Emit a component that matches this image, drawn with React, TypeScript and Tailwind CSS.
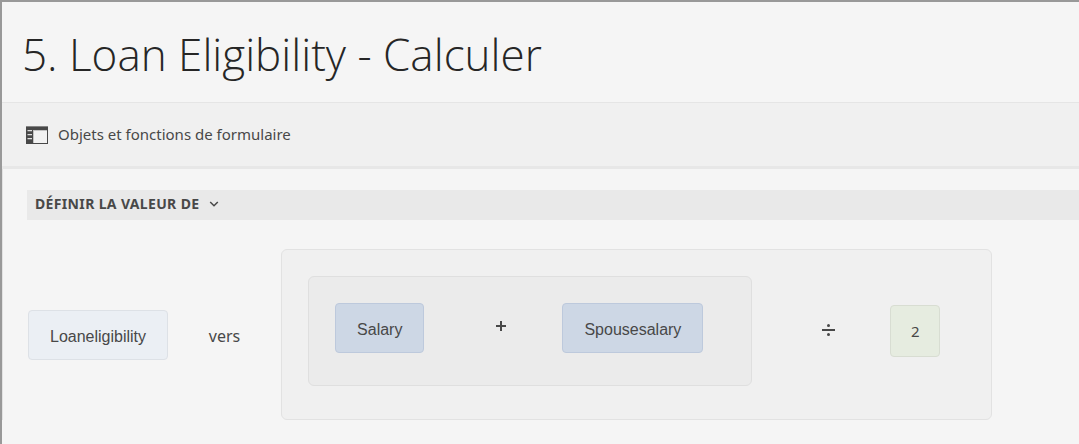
import type { ReactNode } from 'react';

function PanelIcon() {
  return (
    <svg width="22" height="18" viewBox="0 0 22 18" aria-hidden="true" className="shrink-0">
      <path fill="#484848" d="M0 0h22v18H0z" />
      <path fill="#858585" d="M0 0h22v1H0z" />
      <path fill="#f2f2f2" d="M7 4h14v13H7z" />
      <path fill="#c4c4c4" d="M7 4h14v1H7zM7 4h1v13H7z" />
      <path fill="#dedede" d="M1.5 4h4.5v1.3H1.5zM1.5 8h4.5v1.3H1.5zM1.5 12h4.5v1.3H1.5z" />
    </svg>
  );
}

function FieldChip({ children, className }: { children: ReactNode; className: string }) {
  return (
    <button
      type="button"
      className={`h-[50px] shrink-0 rounded border px-[21px] pt-1 font-['Liberation_Sans',sans-serif] text-base ${className}`}
    >
      {children}
    </button>
  );
}

function Operator({ label, children }: { label: string; children: ReactNode }) {
  return (
    <button type="button" aria-label={label} className="flex h-12 w-[138px] shrink-0 items-center justify-center pl-4">
      <svg width="14" height="14" viewBox="0 0 14 14" aria-hidden="true" fill="#484848">
        {children}
      </svg>
    </button>
  );
}

export default function App() {
  return (
    <div className="min-h-screen overflow-hidden border-t-2 border-l-2 border-[#999999] bg-[#f5f5f5] font-['Noto_Sans','Open_Sans',sans-serif] text-[#484848]">
      <header className="flex h-[100px] items-center px-5 pt-1">
        <h1 className="font-['Open_Sans','Noto_Sans',sans-serif] text-[44px] leading-none font-light whitespace-nowrap text-[#262626]">
          5. Loan Eligibility - Calculer
        </h1>
      </header>

      <div className="flex h-[67px] items-center border-t border-b-[3px] border-t-[#e5e5e5] border-b-[#e7e7e7] bg-[#f0f0f0] px-6">
        <button type="button" className="flex items-center gap-2.5 text-[15px] whitespace-nowrap">
          <PanelIcon />
          Objets et fonctions de formulaire
        </button>
      </div>

      <main className="border-l border-[#e2e2e2] pt-[21px] pl-6">
        <button
          type="button"
          className="flex h-[30px] w-full items-center gap-2.5 bg-[#e9e9e9] px-2 pb-0.5 text-sm font-bold tracking-wide uppercase"
        >
          Définir la valeur de
          <svg width="10" height="6" viewBox="0 0 10 6" fill="none" stroke="#484848" strokeWidth="1.5" aria-hidden="true">
            <path d="M1.2 1 5 4.8 8.8 1" />
          </svg>
        </button>

        <div className="flex items-center pt-[29px] pl-px">
          <FieldChip className="border-[#dde1e6] bg-[#ebeff4]">Loaneligibility</FieldChip>
          <span className="w-[113px] shrink-0 pt-0.5 text-center text-base">vers</span>

          <div className="flex shrink-0 items-center rounded-md border border-[#e2e2e2] bg-[#f0f0f0] pt-[26px] pr-[51px] pb-[33px] pl-[26px]">
            <div className="flex items-center rounded-md border border-[#dfdfdf] bg-[#ebebeb] pt-[26px] pr-12 pb-8 pl-[26px]">
              <FieldChip className="border-[#bdc9dc] bg-[#cdd7e5]">Salary</FieldChip>
              <Operator label="plus">
                <path d="M6 0h2v4h4v2H8v4H6V6H2V4h4z" />
              </Operator>
              <FieldChip className="border-[#bdc9dc] bg-[#cdd7e5]">Spousesalary</FieldChip>
            </div>
            <Operator label="divisé par">
              <path d="M0 5h13v2H0z" />
              <circle cx="6.5" cy="1.5" r="1.5" />
              <circle cx="6.5" cy="10.5" r="1.5" />
            </Operator>
            <button type="button" className="h-[52px] w-[50px] shrink-0 rounded border border-[#d8ddd2] bg-[#e6ece0] text-[15px]">
              2
            </button>
          </div>
        </div>
      </main>
    </div>
  );
}
